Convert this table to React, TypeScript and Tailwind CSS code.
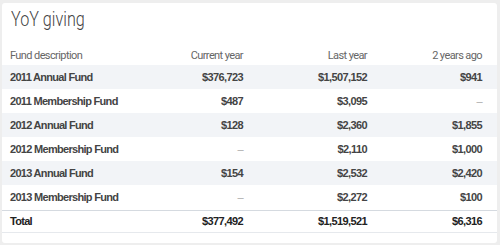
const rows = [
  { name: "2011 Annual Fund", cur: "$376,723", last: "$1,507,152", two: "$941" },
  { name: "2011 Membership Fund", cur: "$487", last: "$3,095", two: "–" },
  { name: "2012 Annual Fund", cur: "$128", last: "$2,360", two: "$1,855" },
  { name: "2012 Membership Fund", cur: "–", last: "$2,110", two: "$1,000" },
  { name: "2013 Annual Fund", cur: "$154", last: "$2,532", two: "$2,420" },
  { name: "2013 Membership Fund", cur: "–", last: "$2,272", two: "$100" },
];

const grid = "grid grid-cols-[138px_103px_124px_115px] items-center";

function Cell({ v, left }: { v: string; left?: boolean }) {
  const dash = v === "–";
  return (
    <div className={`${left ? "pl-2 text-left tracking-[-0.7px]" : "text-right"} ${dash ? "font-normal text-[#aaaaaa]" : ""}`}>
      {v}
    </div>
  );
}

export default function App() {
  return (
    <div className="h-[245px] w-[500px] bg-[#eeeeee] pl-[2px] pr-[3px] pt-[3px]">
      <div className="h-[240px] rounded-[3px] bg-white font-['Roboto',sans-serif]">
        <h1 className="pl-[9px] pt-[3px] text-[21px] font-light leading-[27px] text-[#444444]">
          <span className="inline-block origin-left scale-x-[0.77]">YoY giving</span>
        </h1>

        <div className={`${grid} mt-[14px] h-[18px] text-[11px] tracking-[-0.6px] text-[#666666]`}>
          <div className="pl-2">Fund description</div>
          <div className="text-right">Current year</div>
          <div className="text-right">Last year</div>
          <div className="text-right">2 years ago</div>
        </div>

        <div className="font-['Liberation_Sans',Arial,sans-serif] text-[11px] font-bold tracking-[-0.6px] text-[#444444]">
          {rows.map((r, i) => (
            <div key={r.name} className={`${grid} h-[24px] ${i % 2 === 0 ? "bg-[#f2f4f7]" : ""}`}>
              <Cell v={r.name} left />
              <Cell v={r.cur} />
              <Cell v={r.last} />
              <Cell v={r.two} />
            </div>
          ))}
          <div className={`${grid} mt-[1px] h-[23px] border-y border-y-[#d5dae0] border-b-[#e6e9ed] text-[#222222]`}>
            <div className="pl-2 tracking-[-0.7px]">Total</div>
            <div className="text-right">$377,492</div>
            <div className="text-right">$1,519,521</div>
            <div className="text-right">$6,316</div>
          </div>
        </div>
      </div>
    </div>
  );
}
